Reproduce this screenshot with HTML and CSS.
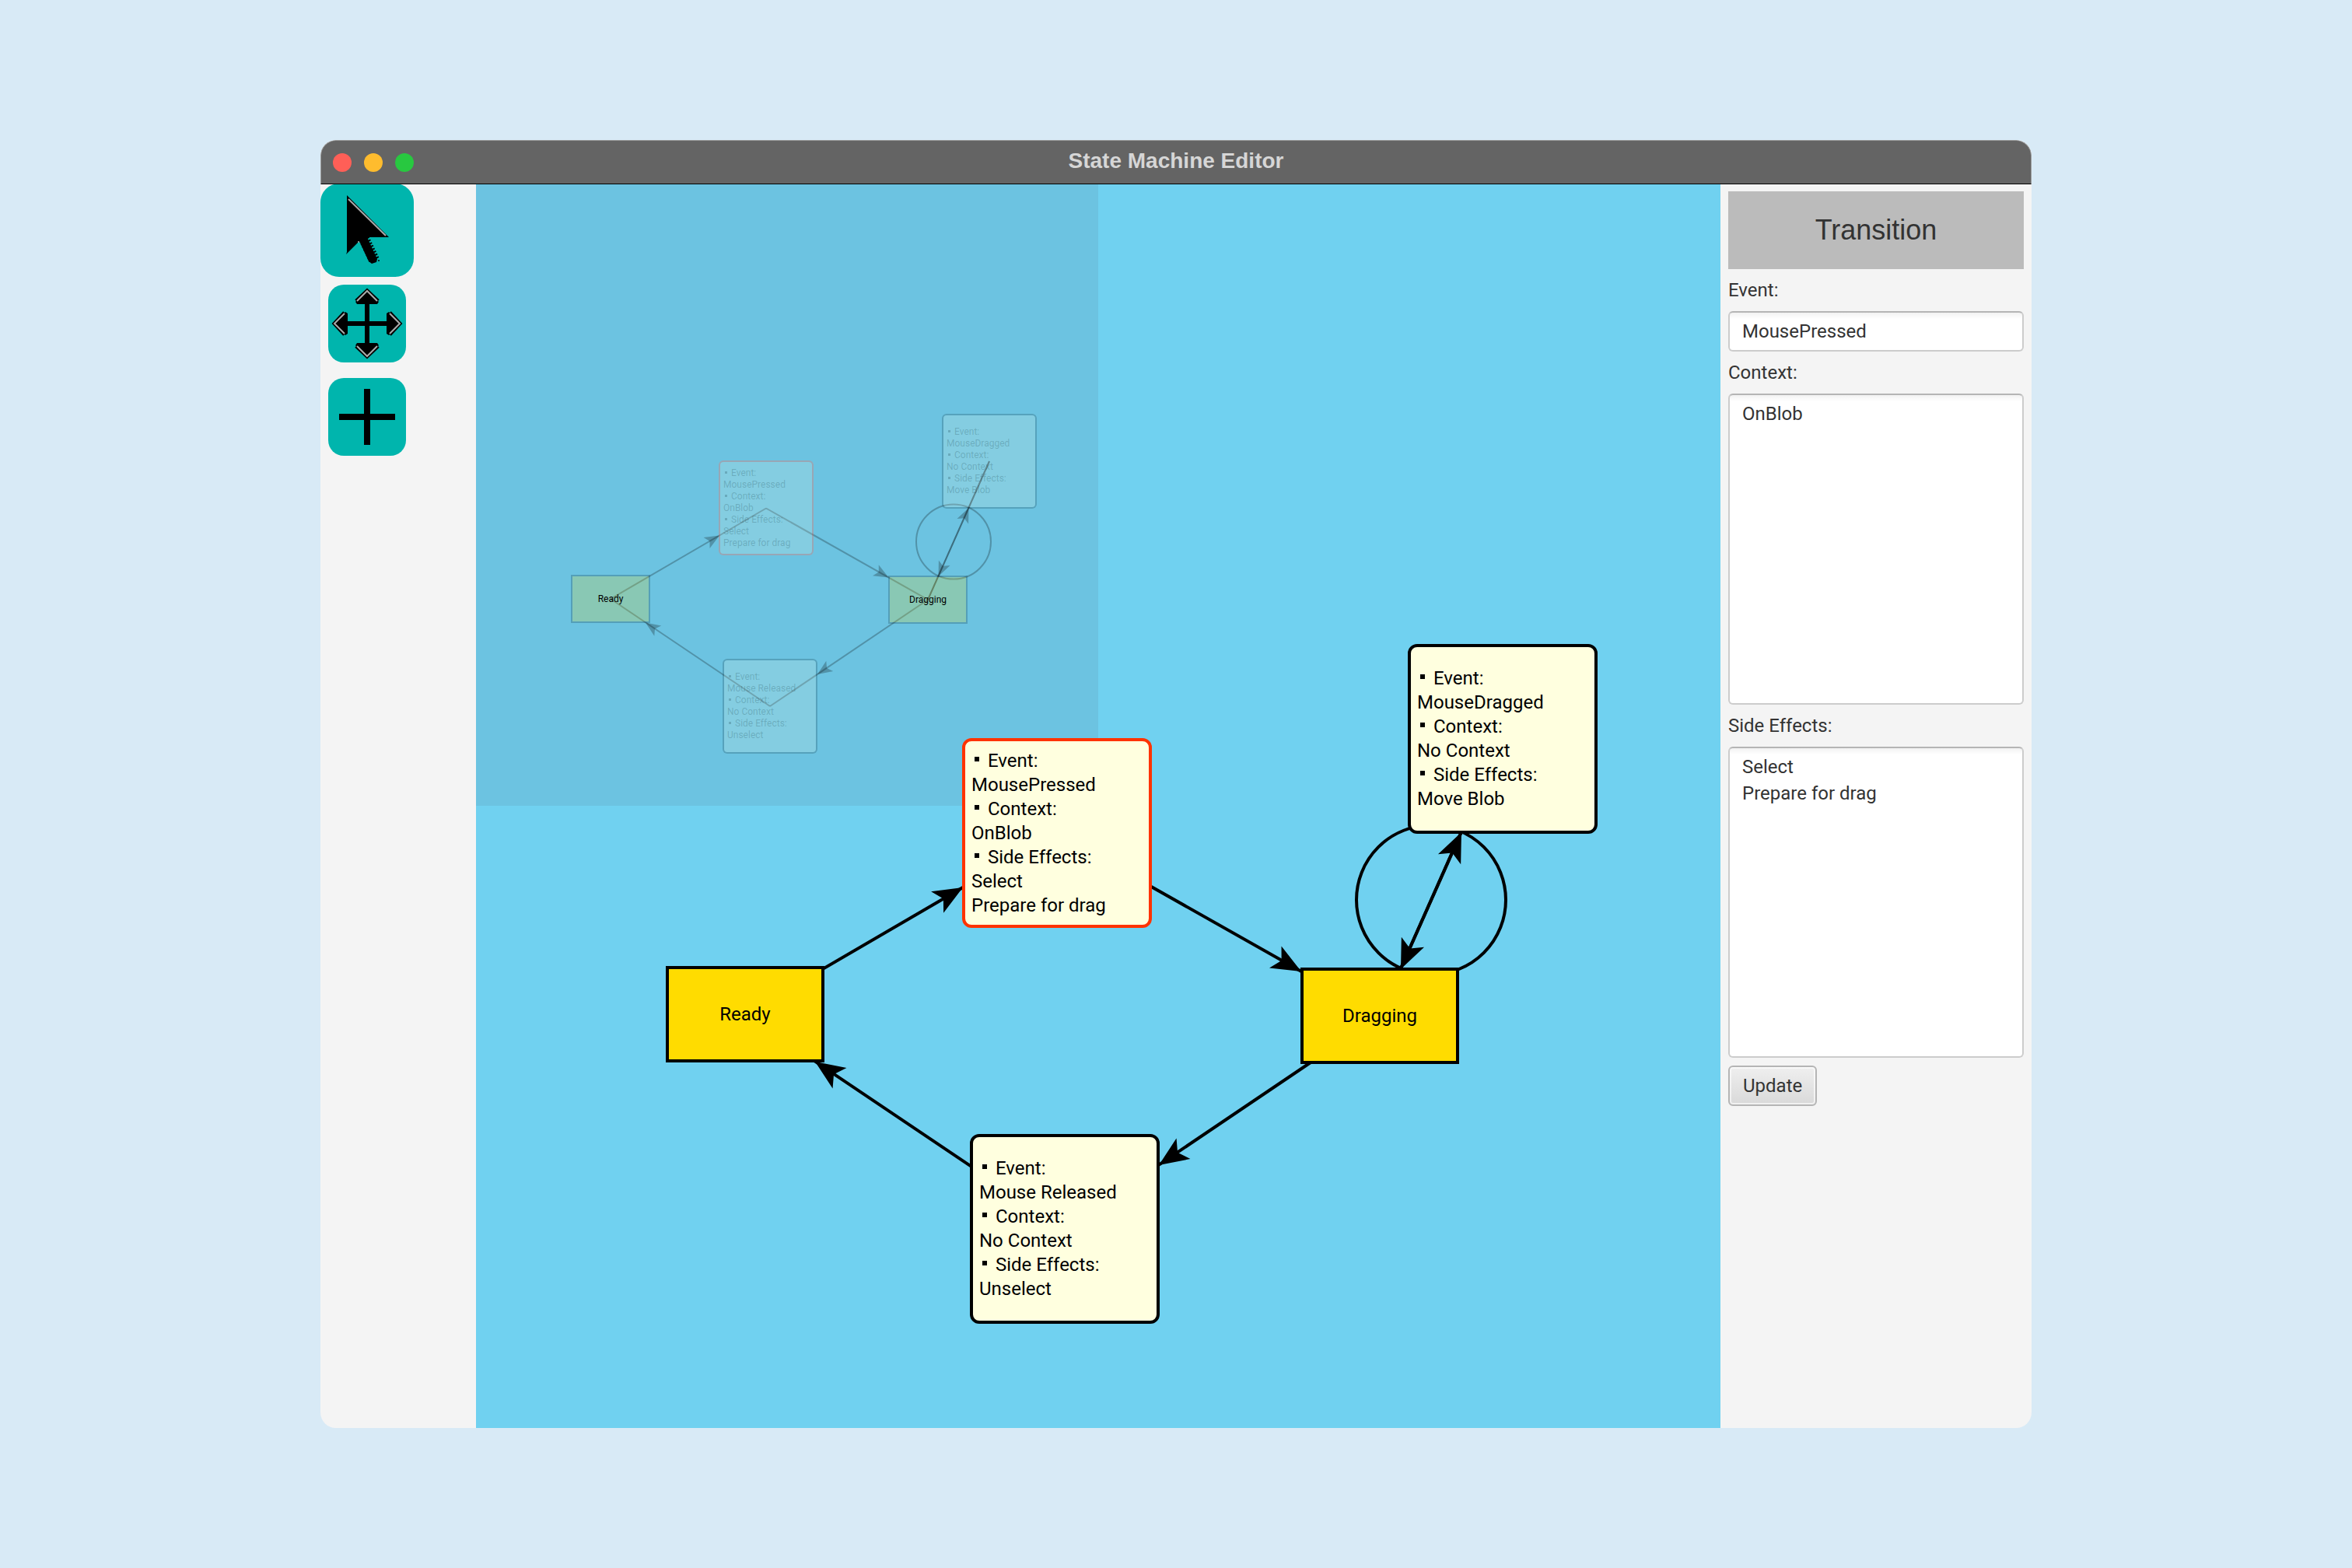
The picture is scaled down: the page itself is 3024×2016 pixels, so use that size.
FILE: index.html
```html
<!DOCTYPE html>
<html lang="en">
<head>
<meta charset="utf-8">
<title>State Machine Editor</title>
<link rel="stylesheet" href="styles.css">
</head>
<body>
<div class="window">
  <header class="titlebar">
    <div class="lights"><span class="light close"></span><span class="light minimise"></span><span class="light zoom"></span></div>
    <h1 class="window-title">State Machine Editor</h1>
  </header>
  <div class="content">
    <nav class="toolbar" aria-label="Tools">
      <button class="tool selected" type="button" aria-label="Select">
        <svg viewBox="0 0 120 120" aria-hidden="true">
          <path d="M34 15L88 69H60L73 97L72 101L66 103L62 100L50 74L33 91L34 88Z"/>
          <path class="ridges" d="M56 71L69 98"/>
          <path class="glint" d="M36 20L84 67"/>
          <circle class="dot" cx="49" cy="75" r="1"/>
          <circle cx="75" cy="99" r="1"/>
        </svg>
      </button>
      <button class="tool" type="button" aria-label="Move">
        <svg viewBox="0 0 100 100" aria-hidden="true">
          <path d="M50 7L65 22L63 25H53V47H75V37L78 35L93 50L78 65L75 63V53H53V75H63L65 78L50 93L35 78L37 75H47V53H25V63L22 65L7 50L22 35L25 37V47H47V25H37L35 22Z"/>
          <path class="rim" d="M36 21L50 8L64 21M36 79L50 92L64 79M21 36L8 50L21 64M79 36L92 50L79 64"/>
          <path class="glint" d="M37 21L50 8L63 21M37 79L50 92L63 79M21 37L8 50L21 63M79 37L92 50L79 63"/>
        </svg>
      </button>
      <button class="tool" type="button" aria-label="Add">
        <svg viewBox="0 0 100 100" aria-hidden="true"><path d="M46 14H54V46H86V54H54V86H46V54H14V46H46Z"/></svg>
      </button>
    </nav>
    <main class="canvas">
      <section class="minimap" aria-label="Overview">
        <svg class="links" viewBox="0 0 1600 1600" aria-hidden="true"><use href="#links"/></svg>
        <div class="node ready"><span>Ready</span></div>
        <div class="node dragging"><span>Dragging</span></div>
        <dl class="card pressed"><dt>Event:</dt><dd>MousePressed</dd><dt>Context:</dt><dd>OnBlob</dd><dt>Side Effects:</dt><dd>Select</dd><dd>Prepare for drag</dd></dl>
        <dl class="card dragged"><dt>Event:</dt><dd>MouseDragged</dd><dt>Context:</dt><dd>No Context</dd><dt>Side Effects:</dt><dd>Move Blob</dd></dl>
        <dl class="card released"><dt>Event:</dt><dd>Mouse Released</dd><dt>Context:</dt><dd>No Context</dd><dt>Side Effects:</dt><dd>Unselect</dd></dl>
      </section>
      <section class="diagram" aria-label="State machine">
        <svg class="links" viewBox="0 0 1600 1600" aria-hidden="true">
          <g id="links">
            <circle class="line" cx="1228" cy="921" r="96"/>
            <path class="line" d="M346 1068L746 835"/>
            <path class="line" d="M746 835L1162 1070"/>
            <path class="line" d="M1162 1070L756 1344"/>
            <path class="line" d="M756 1344L346 1068"/>
            <path class="line" d="M1162 1070L1320 714"/>
            <path class="line" d="M1162 1070L1320 714"/>
            <path class="head" transform="translate(626 905) rotate(-30)" d="M0 0L-38 -16L-29 0L-38 16Z"/>
            <path class="head" transform="translate(1061 1013) rotate(29)" d="M0 0L-38 -16L-29 0L-38 16Z"/>
            <path class="head" transform="translate(878 1262) rotate(146)" d="M0 0L-38 -16L-29 0L-38 16Z"/>
            <path class="head" transform="translate(436 1129) rotate(-146)" d="M0 0L-38 -16L-29 0L-38 16Z"/>
            <path class="head" transform="translate(1267 834) rotate(-66)" d="M0 0L-38 -16L-29 0L-38 16Z"/>
            <path class="head" transform="translate(1189 1010) rotate(114)" d="M0 0L-38 -16L-29 0L-38 16Z"/>
          </g>
        </svg>
        <div class="node ready"><span>Ready</span></div>
        <div class="node dragging"><span>Dragging</span></div>
        <dl class="card pressed"><dt>Event:</dt><dd>MousePressed</dd><dt>Context:</dt><dd>OnBlob</dd><dt>Side Effects:</dt><dd>Select</dd><dd>Prepare for drag</dd></dl>
        <dl class="card dragged"><dt>Event:</dt><dd>MouseDragged</dd><dt>Context:</dt><dd>No Context</dd><dt>Side Effects:</dt><dd>Move Blob</dd></dl>
        <dl class="card released"><dt>Event:</dt><dd>Mouse Released</dd><dt>Context:</dt><dd>No Context</dd><dt>Side Effects:</dt><dd>Unselect</dd></dl>
      </section>
    </main>
    <form class="panel">
      <h2 class="panel-title">Transition</h2>
      <label for="event">Event:</label>
      <input class="field" id="event" type="text" value="MousePressed">
      <label for="context">Context:</label>
      <textarea class="field area" id="context">OnBlob</textarea>
      <label for="effects">Side Effects:</label>
      <textarea class="field area" id="effects">Select
Prepare for drag</textarea>
      <button class="update" type="button">Update</button>
    </form>
  </div>
</div>
</body>
</html>
```
FILE: styles.css
```css
* { box-sizing: border-box; }

body {
  margin: 0;
  min-height: 100vh;
  display: flex;
  align-items: center;
  justify-content: center;
  background: #d8eaf6;
  font: 24px/34px Roboto, "Liberation Sans", sans-serif;
  color: #333;
}

.window {
  width: 100%;
  max-width: 2200px;
  border-radius: 20px;
  overflow: hidden;
  background: #f4f4f4;
}

.titlebar {
  position: relative;
  z-index: 1;
  display: grid;
  grid-template-columns: 1fr auto 1fr;
  align-items: center;
  height: 57px;
  margin-bottom: -1px;
  padding: 0 15px;
  border: 1px solid #999;
  border-bottom-color: #000;
  border-radius: 20px 20px 0 0;
  background: #646464;
}

.lights { display: flex; gap: 16px; }
.light { width: 24px; height: 24px; border-radius: 50%; }
.close { background: #ff5f57; }
.minimise { background: #febc2e; }
.zoom { background: #28c840; }

.window-title {
  margin: 0;
  padding-bottom: 4px;
  font: bold 28px/32px "Liberation Sans", Arial, sans-serif;
  color: #d6d6d6;
}

.content { display: flex; align-items: stretch; }

.toolbar {
  flex: 0 0 200px;
  display: flex;
  flex-direction: column;
  gap: 20px;
  padding: 10px;
}

.tool {
  width: 100px;
  height: 100px;
  padding: 0;
  border: 0;
  border-radius: 20px;
  background: #00b5ad;
}
.tool.selected { transform: scale(1.2); }
.tool svg { display: block; width: 100%; height: 100%; }
.glint { fill: none; stroke: #aaa; stroke-width: 2; }
.rim { fill: none; stroke: #000; stroke-width: 5; }
.ridges { fill: none; stroke: #000; stroke-width: 14; stroke-dasharray: 2 2; }
.dot { fill: #aaa; }

.canvas {
  position: relative;
  flex: 1;
  min-width: 0;
  height: 1600px;
  overflow: hidden;
  background: #70d1f0;
}

/* Full-size diagram */
.diagram { position: absolute; inset: 0; color: #000; line-height: 31px; }
.links { position: absolute; top: 0; left: 0; width: 1600px; height: 1600px; }
.line { fill: none; stroke: #000; stroke-width: 4; opacity: var(--link-opacity, 1); }
.head { opacity: var(--link-opacity, 1); }

.node {
  position: absolute;
  display: flex;
  align-items: center;
  justify-content: center;
  width: 204px;
  height: 124px;
  border: 4px solid #000;
  background: #ffdc00;
}
.card {
  position: absolute;
  display: flex;
  flex-direction: column;
  justify-content: center;
  width: 244px;
  height: 244px;
  margin: 0;
  padding: 0 8px;
  border: 4px solid #000;
  border-radius: 12px;
  background: #ffffdf;
}
.card dt, .card dd { margin: 0; white-space: nowrap; }
.card dt::before {
  content: "";
  display: inline-block;
  width: 6px;
  height: 6px;
  margin: 0 11px 0 4px;
  vertical-align: 7px;
  background: currentColor;
}
.ready { left: 244px; top: 1006px; }
.dragging { left: 1060px; top: 1008px; }
.pressed { left: 625px; top: 713px; }
.diagram .pressed { border-color: #ff3300; }
.dragged { left: 1198px; top: 592px; }
.released { left: 635px; top: 1222px; }

/* Half-scale overview in the corner */
.minimap {
  position: absolute;
  top: 0;
  left: 0;
  width: 800px;
  height: 800px;
  background: #6cc3e1;
  color: #000;
  font-size: 12px;
  line-height: 15px;
}
.minimap .links { --link-opacity: .25; width: 800px; height: 800px; }
.minimap .node {
  width: 102px;
  height: 62px;
  border: 2px solid rgba(0, 30, 40, .22);
  background: rgba(255, 220, 0, .2);
  background-clip: padding-box;
}
.minimap .card {
  width: 122px;
  height: 122px;
  padding: 0 4px;
  border: 2px solid rgba(0, 30, 40, .2);
  border-radius: 6px;
  background: rgba(255, 255, 223, .17);
  background-clip: padding-box;
  color: rgba(0, 30, 40, .2);
}
.minimap .card dt::before {
  width: 3px;
  height: 3px;
  margin: 0 5px 0 2px;
  vertical-align: 3px;
}
.minimap .ready { left: 122px; top: 503px; }
.minimap .dragging { left: 530px; top: 504px; }
.minimap .pressed { left: 312px; top: 356px; border-color: rgba(255, 100, 80, .3); }
.minimap .dragged { left: 599px; top: 296px; }
.minimap .released { left: 317px; top: 611px; }

/* Property panel */
.panel {
  flex: 0 0 400px;
  display: flex;
  flex-direction: column;
  align-items: stretch;
  gap: 10px;
  padding: 10px;
}
.panel-title {
  margin: 0;
  background: #bbb;
  font: 36px/100px "Liberation Sans", Arial, sans-serif;
  text-align: center;
}
.field {
  display: block;
  width: 100%;
  height: 52px;
  margin: 0;
  padding: 7px 16px;
  border: 2px solid #ccc;
  border-top-color: #b5b5b5;
  border-radius: 6px;
  outline: 0;
  background: #fff linear-gradient(#f2f2f2, #fff 8px) no-repeat;
  font: inherit;
  color: inherit;
}
.area { height: 400px; resize: none; }
.update {
  align-self: flex-start;
  height: 52px;
  padding: 0 17px;
  border: 2px solid #b5b5b5;
  border-radius: 6px;
  background: linear-gradient(#efefef, #d9d9d9);
  box-shadow: inset 0 0 0 2px rgba(255, 255, 255, .6);
  font: inherit;
  color: inherit;
}
```
